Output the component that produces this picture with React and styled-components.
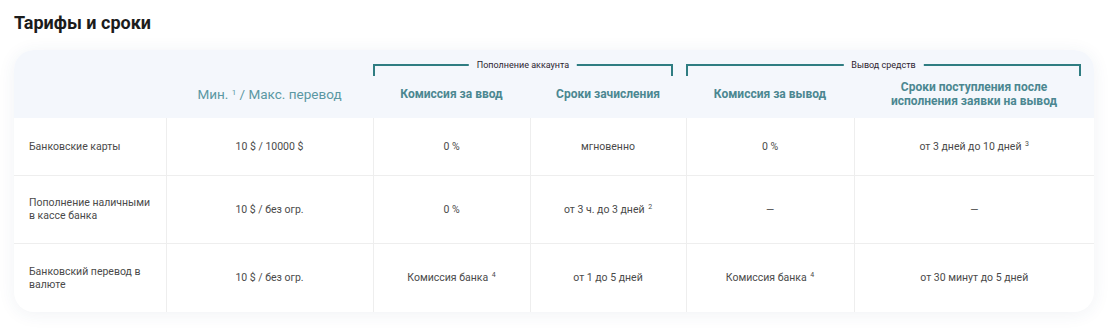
import React from "react";
import styled, { createGlobalStyle } from "styled-components";

const GlobalStyle = createGlobalStyle`
  body {
    margin: 0;
    background: #fff;
    font-family: Roboto, "Liberation Sans", Arial, sans-serif;
  }
`;

const Page = styled.div`
  padding: 12px 20px 20px 14px;
`;

const Title = styled.h2`
  margin: 0 0 16px 0;
  font-size: 18px;
  line-height: 22px;
  font-weight: 700;
  color: #1c1c1c;
`;

const Card = styled.div`
  width: 1080px;
  border-radius: 20px;
  overflow: hidden;
  background: #fff;
  box-shadow: 0 2px 18px rgba(40, 70, 120, 0.07);
`;

const Table = styled.table`
  width: 100%;
  border-collapse: collapse;
  table-layout: fixed;
`;

const Head = styled.thead`
  background: #f4f7fc;
`;

const GroupCell = styled.th`
  height: 26px;
  padding: 14px 13px 0 0;
  vertical-align: top;
  box-sizing: border-box;
`;

const Bracket = styled.div`
  position: relative;
  height: 12px;
  border: 2px solid #2f7d82;
  border-bottom: none;
  box-sizing: border-box;
`;

const BracketLabel = styled.span`
  position: absolute;
  left: 50%;
  top: -6px;
  transform: translateX(-50%);
  background: #f4f7fc;
  padding: 0 8px;
  font-size: 9px;
  line-height: 11px;
  font-weight: 400;
  color: #2d2430;
  white-space: nowrap;
`;

const ColHead = styled.th`
  height: 42px;
  padding: 0 10px 6px;
  box-sizing: border-box;
  vertical-align: middle;
  text-align: center;
  font-size: 12px;
  line-height: 14px;
  font-weight: 700;
  color: #4b8791;
`;

const LimitHead = styled.th`
  padding: 20px 10px 0;
  vertical-align: middle;
  text-align: center;
  font-size: 13.5px;
  line-height: 16px;
  font-weight: 400;
  color: #5b98a3;
  sup {
    font-size: 8px;
    vertical-align: 4px;
    line-height: 0;
  }
`;

const Row = styled.tr`
  & + & td {
    border-top: 1px solid #eeeeee;
  }
`;

const Cell = styled.td`
  height: ${(p) => p.$h}px;
  padding: ${(p) => (p.$label ? "0 4px 0 15px" : "0 10px")};
  box-sizing: border-box;
  font-size: 10.5px;
  line-height: 13px;
  color: #4a4a4a;
  text-align: ${(p) => (p.$label ? "left" : "center")};
  vertical-align: middle;
  & + & {
    border-left: 1px solid #eeeeee;
  }
  sup {
    font-size: 7px;
    line-height: 0;
    vertical-align: 4px;
    margin-left: 1px;
  }
`;

const widths = [152, 207, 157, 156, 168, 240];

const rows = [
  {
    h: 57,
    cells: [
      "Банковские карты",
      "10 $ / 10000 $",
      "0 %",
      "мгновенно",
      "0 %",
      ["от 3 дней до 10 дней", "3"],
    ],
  },
  {
    h: 68,
    cells: [
      ["Пополнение наличными", <br key="b" />, "в кассе банка"],
      "10 $ / без огр.",
      "0 %",
      ["от 3 ч. до 3 дней", "2"],
      "—",
      "—",
    ],
  },
  {
    h: 69,
    cells: [
      ["Банковский перевод в", <br key="b" />, "валюте"],
      "10 $ / без огр.",
      ["Комиссия банка", "4"],
      "от 1 до 5 дней",
      ["Комиссия банка", "4"],
      "от 30 минут до 5 дней",
    ],
  },
];

const renderValue = (v, i) => {
  if (i > 0 && Array.isArray(v) && v.length === 2) {
    return (
      <>
        {v[0]} <sup>{v[1]}</sup>
      </>
    );
  }
  return v;
};

const App = () => (
  <Page>
    <GlobalStyle />
    <Title>Тарифы и сроки</Title>
    <Card>
      <Table>
        <colgroup>
          {widths.map((w, i) => (
            <col key={i} style={{ width: w }} />
          ))}
        </colgroup>
        <Head>
          <tr>
            <th rowSpan={2} />
            <LimitHead rowSpan={2}>
              Мин. <sup>1</sup> / Макс. перевод
            </LimitHead>
            <GroupCell colSpan={2}>
              <Bracket>
                <BracketLabel>Пополнение аккаунта</BracketLabel>
              </Bracket>
            </GroupCell>
            <GroupCell colSpan={2}>
              <Bracket>
                <BracketLabel>Вывод средств</BracketLabel>
              </Bracket>
            </GroupCell>
          </tr>
          <tr>
            <ColHead>Комиссия за ввод</ColHead>
            <ColHead>Сроки зачисления</ColHead>
            <ColHead>Комиссия за вывод</ColHead>
            <ColHead>
              Сроки поступления после
              <br />
              исполнения заявки на вывод
            </ColHead>
          </tr>
        </Head>
        <tbody>
          {rows.map((r, ri) => (
            <Row key={ri}>
              {r.cells.map((c, ci) => (
                <Cell key={ci} $h={r.h} $label={ci === 0}>
                  {renderValue(c, ci)}
                </Cell>
              ))}
            </Row>
          ))}
        </tbody>
      </Table>
    </Card>
  </Page>
);

export default App;
